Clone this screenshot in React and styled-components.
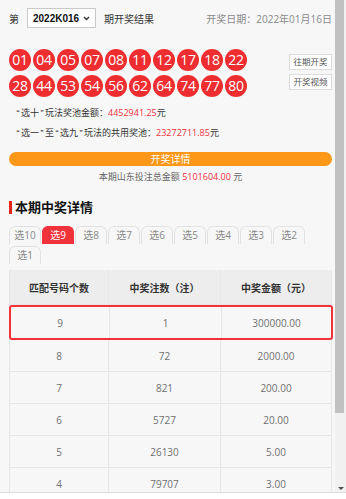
import React from 'react';
import styled, { createGlobalStyle } from 'styled-components';

const GlobalStyle = createGlobalStyle`
  html, body {
    margin: 0;
    padding: 0;
    background: #fff;
  }
  body {
    font-family: "Open Sans", "Noto Sans CJK SC", sans-serif;
    -webkit-font-smoothing: antialiased;
  }
`;

const red = '#f0323a';

const Page = styled.div`
  width: 346px;
  height: 499px;
  display: flex;
  flex-direction: column;
  background: #fff;
  overflow: hidden;
`;

const Frame = styled.div`
  height: 493px;
  display: flex;
  border-bottom: 1px solid #dcdcdc;
  box-sizing: border-box;
`;

const Content = styled.div`
  flex: 1;
  background: #f7f7f7;
  padding: 8px 3px 0 9px;
  overflow: hidden;
  box-sizing: border-box;
`;

const ScrollBar = styled.div`
  width: 11px;
  background: #f1f1f1;
  display: flex;
  flex-direction: column;
  align-items: flex-start;
`;

const Thumb = styled.div`
  width: 9px;
  height: 413px;
  background: #c1c1c1;
`;

const ArrowDown = styled.div`
  margin: auto 0 2px 3px;
  width: 0;
  height: 0;
  border-left: 3px solid transparent;
  border-right: 3px solid transparent;
  border-top: 3px solid #505050;
`;

/* header */
const Header = styled.div`
  display: flex;
  align-items: center;
  height: 20px;
  font-size: 10px;
  color: #333;
`;

const Select = styled.div`
  margin: 0 8px 0 8px;
  width: 69px;
  height: 20px;
  box-sizing: border-box;
  border: 1px solid #c8c8c8;
  background: #fff;
  display: flex;
  align-items: center;
  justify-content: space-between;
  padding: 0 5px 0 5px;
  font-family: "Liberation Sans", Arial, sans-serif;
  font-weight: bold;
  font-size: 10px;
  color: #111;
`;

const DateText = styled.span`
  margin-left: auto;
  color: #8a8a8a;
`;

/* balls */
const BallArea = styled.div`
  display: flex;
  justify-content: space-between;
  margin-top: 21px;
`;

const Balls = styled.div`
  display: grid;
  grid-template-columns: repeat(10, 22px);
  column-gap: 2px;
  row-gap: 4px;
`;

const Ball = styled.span`
  width: 22px;
  height: 22px;
  border-radius: 50%;
  background: #ee2d30;
  color: #fff;
  font-size: 14px;
  line-height: 22px;
  text-align: center;
  letter-spacing: -0.3px;
`;

const SideButtons = styled.div`
  display: flex;
  flex-direction: column;
  gap: 4px;
  padding-top: 5px;
`;

const SmallButton = styled.span`
  width: 43px;
  height: 16px;
  box-sizing: border-box;
  border: 1px solid #dcdcdc;
  background: #fff;
  color: #555;
  font-size: 8.5px;
  line-height: 14px;
  text-align: center;
`;

/* pool info */
const Info = styled.div`
  margin-top: 6px;
  padding-left: 6px;
  font-size: 9px;
  line-height: 19px;
  color: #333;
`;

const Quote = styled.span`
  font-family: "Liberation Sans", Arial, sans-serif;
  padding: 0 1.5px;
`;

const Red = styled.span`
  color: ${red};
`;

const DetailBar = styled.div`
  margin-top: 9px;
  height: 14px;
  border-radius: 7px;
  background: #fd9718;
  color: #fff;
  font-size: 10px;
  line-height: 14px;
  text-align: center;
`;

const Total = styled.div`
  margin-top: 3px;
  font-size: 9px;
  line-height: 16px;
  color: #666;
  text-align: center;
`;

const Title = styled.h2`
  margin: 13px 0 0;
  display: flex;
  align-items: center;
  gap: 3px;
  font-size: 13px;
  line-height: 18px;
  font-weight: bold;
  color: #111;

  &:before {
    content: '';
    width: 3px;
    height: 13px;
    background: #e2231a;
  }
`;

/* tabs */
const Tabs = styled.div`
  margin-top: 10px;
  display: flex;
  flex-wrap: wrap;
  column-gap: 1px;
  row-gap: 2px;
`;

const Tab = styled.span`
  width: 32px;
  height: 18px;
  box-sizing: border-box;
  border: 1px solid ${(p) => (p.$active ? red : '#e2e2e2')};
  border-bottom: none;
  border-radius: 6px 6px 0 0;
  background: ${(p) => (p.$active ? red : '#f7f7f7')};
  color: ${(p) => (p.$active ? '#fff' : '#888')};
  font-size: 10px;
  line-height: 17px;
  text-align: center;
`;

/* table */
const Table = styled.div`
  margin-top: 6px;
  width: 323px;
  border-left: 1px solid #e6e6e6;
  border-right: 1px solid #e6e6e6;
  box-sizing: border-box;
`;

const Row = styled.div`
  display: grid;
  grid-template-columns: 98px 112px 1fr;
  height: ${(p) => (p.$head ? 35 : p.$highlight ? 35 : 32)}px;
  box-sizing: border-box;
  background: ${(p) => (p.$head ? '#ededed' : '#f7f7f7')};
  border-bottom: 1px solid #e6e6e6;
  ${(p) =>
    p.$highlight &&
    `
    border: 2px solid ${red};
    border-radius: 3px;
    margin: 0 -2px 0 -1px;
  `}
`;

const Cell = styled.div`
  display: flex;
  align-items: center;
  justify-content: center;
  font-size: 10px;
  color: ${(p) => (p.$head ? '#333' : '#707070')};
  font-weight: ${(p) => (p.$head ? 'bold' : 'normal')};
  & + & {
    border-left: 1px solid #e6e6e6;
  }
`;

const balls = ['01', '04', '05', '07', '08', '11', '12', '17', '18', '22', '28', '44', '53', '54', '56', '62', '64', '74', '77', '80'];
const tabs = ['选10', '选9', '选8', '选7', '选6', '选5', '选4', '选3', '选2', '选1'];
const rows = [
  ['9', '1', '300000.00'],
  ['8', '72', '2000.00'],
  ['7', '821', '200.00'],
  ['6', '5727', '20.00'],
  ['5', '26130', '5.00'],
  ['4', '79707', '3.00'],
];

const Chevron = () => (
  <svg width="7" height="5" viewBox="0 0 7 5">
    <path d="M1 1 L3.5 3.5 L6 1" fill="none" stroke="#333" strokeWidth="1.4" />
  </svg>
);

const Q = ({ children }) => (
  <>
    <Quote>“</Quote>
    {children}
    <Quote>”</Quote>
  </>
);

export default function App() {
  return (
    <Page>
      <GlobalStyle />
      <Frame>
        <Content>
          <Header>
            <span>第</span>
            <Select>
              2022K016
              <Chevron />
            </Select>
            <span>期开奖结果</span>
            <DateText>开奖日期：2022年01月16日</DateText>
          </Header>

          <BallArea>
            <Balls>
              {balls.map((b) => (
                <Ball key={b}>{b}</Ball>
              ))}
            </Balls>
            <SideButtons>
              <SmallButton>往期开奖</SmallButton>
              <SmallButton>开奖视频</SmallButton>
            </SideButtons>
          </BallArea>

          <Info>
            <div>
              <Q>选十</Q>玩法奖池金额：<Red>4452941.25</Red>元
            </div>
            <div>
              <Q>选一</Q>至<Q>选九</Q>玩法的共用奖池：<Red>23272711.85</Red>元
            </div>
          </Info>

          <DetailBar>开奖详情</DetailBar>
          <Total>
            本期山东投注总金额 <Red>5101604.00</Red> 元
          </Total>

          <Title>本期中奖详情</Title>

          <Tabs>
            {tabs.map((t) => (
              <Tab key={t} $active={t === '选9'}>
                {t}
              </Tab>
            ))}
          </Tabs>

          <Table>
            <Row $head>
              <Cell $head>匹配号码个数</Cell>
              <Cell $head>中奖注数（注）</Cell>
              <Cell $head>中奖金额（元）</Cell>
            </Row>
            {rows.map((r, i) => (
              <Row key={r[0]} $highlight={i === 0}>
                {r.map((c, j) => (
                  <Cell key={j}>{c}</Cell>
                ))}
              </Row>
            ))}
          </Table>
        </Content>
        <ScrollBar>
          <Thumb />
          <ArrowDown />
        </ScrollBar>
      </Frame>
    </Page>
  );
}
